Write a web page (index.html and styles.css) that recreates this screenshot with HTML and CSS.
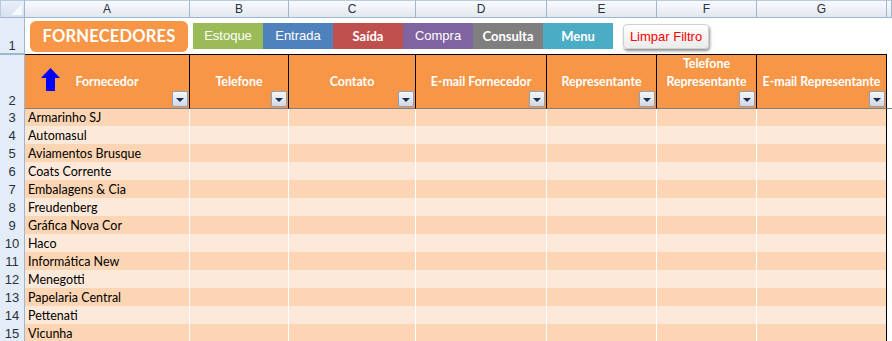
FILE: index.html
```html
<!DOCTYPE html>
<html lang="pt-BR">
<head>
    <meta charset="UTF-8">
    <title>Fornecedores</title>
    <link rel="stylesheet" href="styles.css">
</head>
<body>
    <div class="sheet">
        <!-- Column letters -->
        <div class="line colheads">
            <div class="corner"><span class="corner-tri"></span></div>
            <div class="colhead">A</div>
            <div class="colhead">B</div>
            <div class="colhead">C</div>
            <div class="colhead">D</div>
            <div class="colhead">E</div>
            <div class="colhead">F</div>
            <div class="colhead">G</div>
            <div class="colhead"></div>
        </div>

        <!-- Row 1: navigation -->
        <div class="line r1">
            <div class="rownum">1</div>
            <div class="toolbar">
                <div class="title-btn">FORNECEDORES</div>
                <div class="nav">
                    <span class="nav-btn green">Estoque</span>
                    <span class="nav-btn blue">Entrada</span>
                    <span class="nav-btn red bold">Saída</span>
                    <span class="nav-btn purple">Compra</span>
                    <span class="nav-btn gray bold">Consulta</span>
                    <span class="nav-btn teal bold">Menu</span>
                </div>
                <div class="clear-btn">Limpar Filtro</div>
            </div>
        </div>

        <!-- Row 2: table header -->
        <div class="line r2">
            <div class="rownum">2</div>
            <div class="hcell">
                <svg class="sort-arrow" width="19" height="23" viewBox="0 0 19 23">
                    <polygon points="9.5,0 19,10 14,10 14,23 5,23 5,10 0,10" fill="#0000ff"/>
                </svg>
                <span>Fornecedor</span><i class="filter"></i>
            </div>
            <div class="hcell"><span>Telefone</span><i class="filter"></i></div>
            <div class="hcell"><span>Contato</span><i class="filter"></i></div>
            <div class="hcell"><span>E-mail Fornecedor</span><i class="filter"></i></div>
            <div class="hcell"><span>Representante</span><i class="filter"></i></div>
            <div class="hcell"><span>Telefone<br>Representante</span><i class="filter"></i></div>
            <div class="hcell last"><span>E-mail Representante</span><i class="filter"></i></div>
            <div class="blank"></div>
        </div>

        <!-- Data rows -->
        <div class="line data dark"><div class="rownum">3</div><div class="cell">Armarinho SJ</div><div class="cell"></div><div class="cell"></div><div class="cell"></div><div class="cell"></div><div class="cell"></div><div class="cell last"></div><div class="blank"></div></div>
        <div class="line data light"><div class="rownum">4</div><div class="cell">Automasul</div><div class="cell"></div><div class="cell"></div><div class="cell"></div><div class="cell"></div><div class="cell"></div><div class="cell last"></div><div class="blank"></div></div>
        <div class="line data dark"><div class="rownum">5</div><div class="cell">Aviamentos Brusque</div><div class="cell"></div><div class="cell"></div><div class="cell"></div><div class="cell"></div><div class="cell"></div><div class="cell last"></div><div class="blank"></div></div>
        <div class="line data light"><div class="rownum">6</div><div class="cell">Coats Corrente</div><div class="cell"></div><div class="cell"></div><div class="cell"></div><div class="cell"></div><div class="cell"></div><div class="cell last"></div><div class="blank"></div></div>
        <div class="line data dark"><div class="rownum">7</div><div class="cell">Embalagens &amp; Cia</div><div class="cell"></div><div class="cell"></div><div class="cell"></div><div class="cell"></div><div class="cell"></div><div class="cell last"></div><div class="blank"></div></div>
        <div class="line data light"><div class="rownum">8</div><div class="cell">Freudenberg</div><div class="cell"></div><div class="cell"></div><div class="cell"></div><div class="cell"></div><div class="cell"></div><div class="cell last"></div><div class="blank"></div></div>
        <div class="line data dark"><div class="rownum">9</div><div class="cell">Gráfica Nova Cor</div><div class="cell"></div><div class="cell"></div><div class="cell"></div><div class="cell"></div><div class="cell"></div><div class="cell last"></div><div class="blank"></div></div>
        <div class="line data light"><div class="rownum">10</div><div class="cell">Haco</div><div class="cell"></div><div class="cell"></div><div class="cell"></div><div class="cell"></div><div class="cell"></div><div class="cell last"></div><div class="blank"></div></div>
        <div class="line data dark"><div class="rownum">11</div><div class="cell">Informática New</div><div class="cell"></div><div class="cell"></div><div class="cell"></div><div class="cell"></div><div class="cell"></div><div class="cell last"></div><div class="blank"></div></div>
        <div class="line data light"><div class="rownum">12</div><div class="cell">Menegotti</div><div class="cell"></div><div class="cell"></div><div class="cell"></div><div class="cell"></div><div class="cell"></div><div class="cell last"></div><div class="blank"></div></div>
        <div class="line data dark"><div class="rownum">13</div><div class="cell">Papelaria Central</div><div class="cell"></div><div class="cell"></div><div class="cell"></div><div class="cell"></div><div class="cell"></div><div class="cell last"></div><div class="blank"></div></div>
        <div class="line data light"><div class="rownum">14</div><div class="cell">Pettenati</div><div class="cell"></div><div class="cell"></div><div class="cell"></div><div class="cell"></div><div class="cell"></div><div class="cell last"></div><div class="blank"></div></div>
        <div class="line data dark"><div class="rownum">15</div><div class="cell">Vicunha</div><div class="cell"></div><div class="cell"></div><div class="cell"></div><div class="cell"></div><div class="cell"></div><div class="cell last"></div><div class="blank"></div></div>
    </div>
</body>
</html>
```

FILE: styles.css
```css
* {
    box-sizing: border-box;
}
body {
    margin: 0;
    background: #ffffff;
    font-family: "Lato", "Liberation Sans", sans-serif;
    overflow: hidden;
}
.sheet {
    width: 892px;
}
.line {
    display: grid;
    grid-template-columns: 25px 165px 99px 127px 131px 110px 100px 130px 5px;
}

/* column letters */
.colheads {
    height: 18px;
}
.corner {
    position: relative;
    background: linear-gradient(#e9eff8, #d6e1f1);
    border-right: 1px solid #9eb6ce;
    border-bottom: 1px solid #9eb6ce;
    border-left: 1px solid #b8cbe0;
    border-top: 1px solid #b8cbe0;
}
.corner-tri {
    position: absolute;
    right: 2px;
    bottom: 2px;
    width: 0;
    height: 0;
    border-left: 11px solid transparent;
    border-bottom: 11px solid #f6f9fd;
}
.colhead {
    background: linear-gradient(#f9fbfd, #e2e8f1);
    border-right: 1px solid #9eb6ce;
    border-bottom: 1px solid #9eb6ce;
    border-top: 1px solid #b8cbe0;
    color: #27313f;
    font-family: "Liberation Sans", sans-serif;
    font-size: 12px;
    text-align: center;
    line-height: 16px;
}

/* row numbers */
.rownum {
    background: #e4ecf7;
    border-right: 1px solid #9eb6ce;
    border-bottom: 1px solid #9eb6ce;
    color: #27313f;
    font-family: "Liberation Sans", sans-serif;
    font-size: 13px;
    display: flex;
    align-items: flex-end;
    justify-content: center;
    padding-bottom: 0;
}

/* row 1 */
.r1 {
    height: 36px;
}
.toolbar {
    grid-column: 2 / -1;
    display: flex;
    align-items: center;
    padding-left: 5px;
}
.title-btn {
    width: 158px;
    height: 31px;
    margin-top: 1px;
    background: #f79646;
    border-radius: 6px;
    color: #ffffff;
    font-weight: bold;
    font-size: 16.5px;
    letter-spacing: 0.2px;
    text-align: center;
    line-height: 31px;
}
.nav {
    display: flex;
    margin-left: 5px;
}
.nav-btn {
    width: 70px;
    height: 26px;
    line-height: 26px;
    text-align: center;
    color: #ffffff;
    font-family: "Liberation Sans", sans-serif;
    font-size: 13px;
}
.nav-btn.bold {
    font-family: "Lato", sans-serif;
    font-weight: bold;
    font-size: 13px;
}
.green { background: #9bbb59; }
.blue { background: #4f81bd; }
.red { background: #c0504d; }
.purple { background: #8064a2; }
.gray { background: #7f7f7f; }
.teal { background: #4bacc6; }
.clear-btn {
    width: 86px;
    height: 25px;
    margin-left: 10px;
    border-radius: 4px;
    border: 1px solid #d0d0d0;
    background: linear-gradient(#ffffff, #ebebeb);
    box-shadow: 1px 2px 3px rgba(0, 0, 0, 0.45);
    color: #ff0000;
    font-family: "Liberation Sans", sans-serif;
    font-size: 13px;
    text-align: center;
    line-height: 23px;
}

/* row 2: headers */
.r2 {
    height: 54px;
}
.r2 .rownum {
    border-top: 1px solid #9eb6ce;
}
.hcell {
    position: relative;
    background: #f79646;
    border-top: 1px solid #000000;
    border-right: 1px solid #000000;
    border-bottom: 1px solid #7f7f7f;
    color: #ffffff;
    font-weight: bold;
    font-size: 12.4px;
    line-height: 18px;
    text-align: center;
    display: flex;
    align-items: flex-end;
    justify-content: center;
    padding-bottom: 17px;
}
.r2 .blank {
    border-top: 1px solid #ffffff;
    border-bottom: 1px solid #7f7f7f;
}
.sort-arrow {
    position: absolute;
    left: 16px;
    top: 13px;
}
.filter {
    position: absolute;
    right: 1px;
    bottom: 1px;
    width: 16px;
    height: 16px;
    border: 1px solid #8aa0bf;
    border-radius: 2px;
    background: linear-gradient(#f4f6fa, #d1d9e6);
}
.filter::after {
    content: "";
    position: absolute;
    left: 3px;
    top: 6px;
    border-left: 4px solid transparent;
    border-right: 4px solid transparent;
    border-top: 4px solid #1f2d4d;
}

/* data rows */
.data {
    height: 18px;
}
.cell {
    border-right: 1px solid #ffffff;
    border-bottom: 1px solid #ffffff;
    color: #000000;
    font-size: 12.5px;
    line-height: 19px;
    padding-left: 3px;
    white-space: nowrap;
}
.dark .cell {
    background: #fcd5b4;
}
.light .cell {
    background: #fde9d9;
}
.cell.last {
    border-right: 1px solid #000000;
}
.data .rownum {
    align-items: center;
}
```
